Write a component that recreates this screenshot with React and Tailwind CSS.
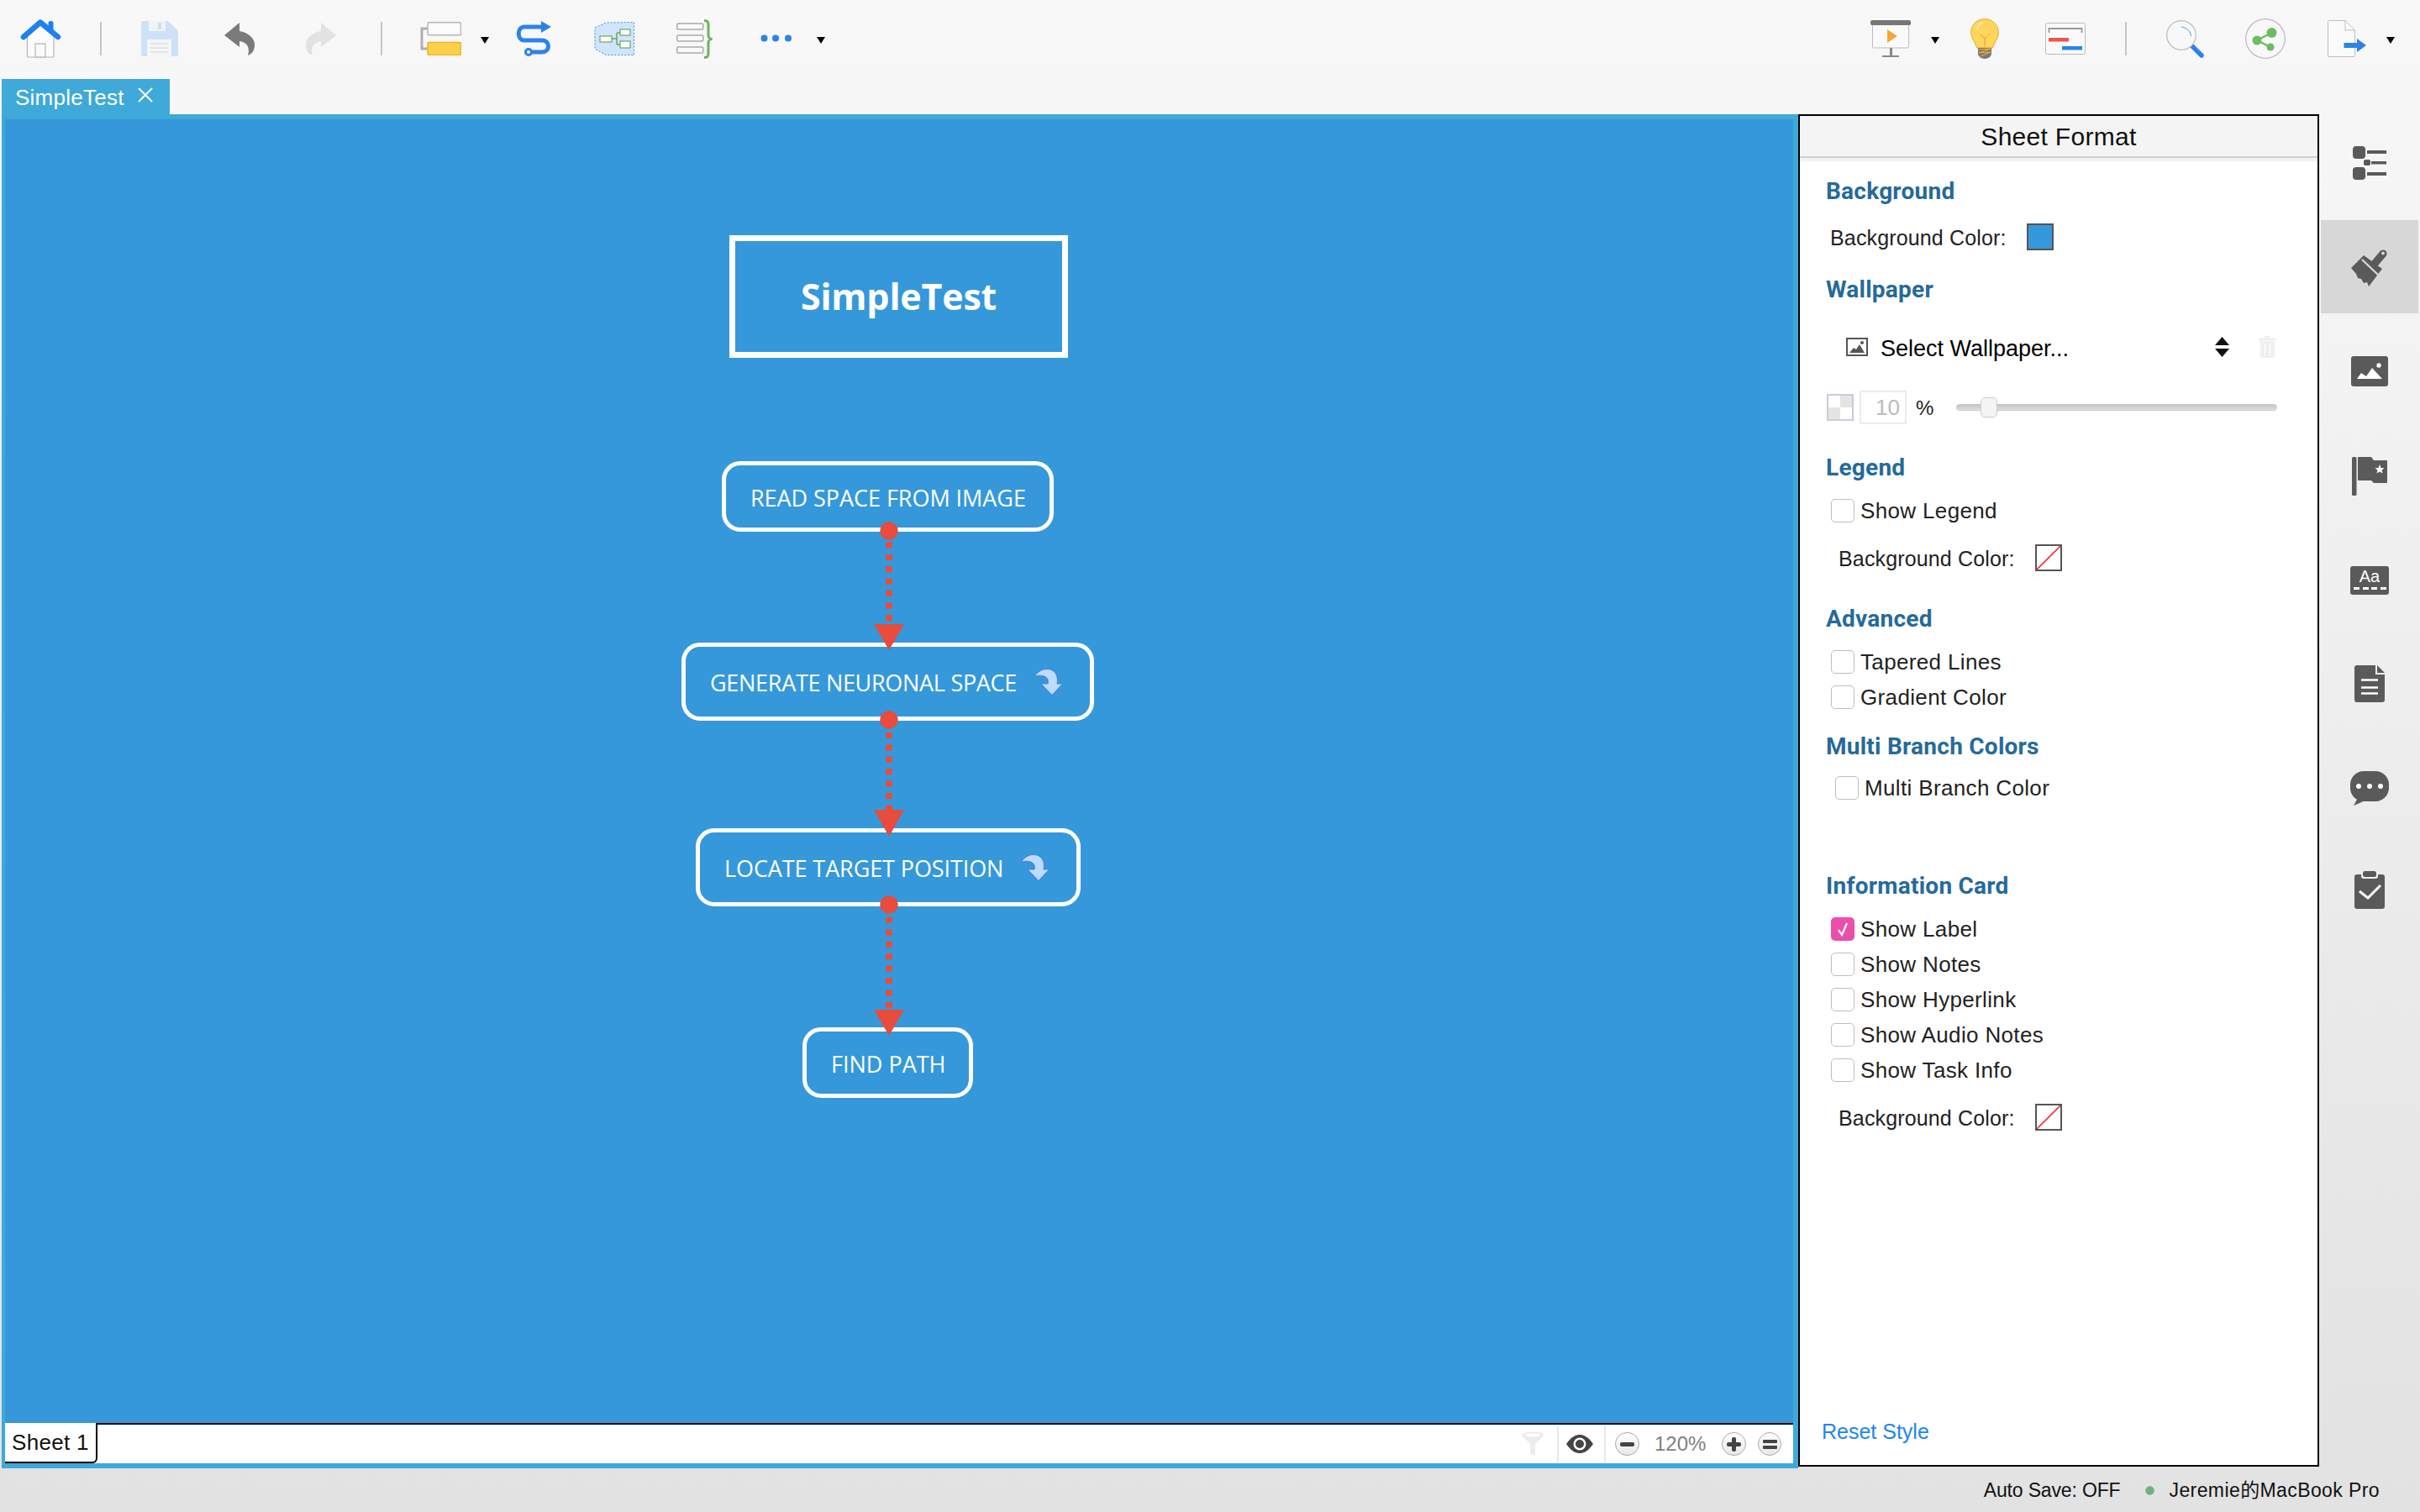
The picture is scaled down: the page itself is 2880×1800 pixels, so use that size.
import React from "react";

const Caret = ({ cls = "" }) => (
  <svg viewBox="0 0 10 8" className={`w-[10px] h-[8px] shrink-0 mt-[4px] ${cls}`}>
    <polygon points="0,0 10,0 5,8" fill="#000" />
  </svg>
);
const Sep = ({ cls = "" }) => <div className={`w-[2px] h-[40px] bg-[#c6c6c6] shrink-0 ${cls}`} />;

const Home = () => (
  <svg viewBox="0 0 50 46" className="w-[50px] h-[46px] shrink-0 ml-[24px]">
    <path d="M8.5 20 V44 Q8.5 45 9.5 45 H39 Q40 45 40 44 V20 L24 7Z" fill="#fcfcfc" stroke="#b4b4b4" strokeWidth="1.2" />
    <rect x="18" y="29" width="12" height="16" fill="#fafafa" stroke="#b4b4b4" strokeWidth="1.2" />
    <rect x="33.5" y="2" width="6" height="14" rx="2.5" fill="#1f80ee" />
    <path d="M4 21 L24 3.5 L45 21" fill="none" stroke="#1f80ee" strokeWidth="6.5" strokeLinecap="round" strokeLinejoin="round" />
  </svg>
);
const Save = () => (
  <svg viewBox="0 0 44 42" className="w-[44px] h-[42px] shrink-0 ml-[47px]">
    <path d="M1 0 H32 L44 12 V40 Q44 42 42 42 H2 Q0 42 0 40 V1Z" fill="#cde2f7" />
    <rect x="9" y="0" width="20" height="12" fill="#eef3f8" />
    <rect x="20" y="2" width="4" height="8" fill="#d5dce4" />
    <rect x="7" y="22" width="29" height="20" fill="#f3f5f7" />
    <path d="M11 27 H32 M11 32 H32 M11 37 H32" stroke="#dcdfe3" strokeWidth="1.5" />
  </svg>
);
const Undo = ({ color, flip, cls }) => (
  <svg viewBox="0 0 37 39" className={`w-[37px] h-[39px] shrink-0 ${flip ? "-scale-x-100" : ""} ${cls}`}>
    <path d="M0 15 L18 0 L18 10 C30 12 37 20 36 28 C35.5 33 33 37 28 39 C30 33 29 27 24 24 C22 23 20 22 18 22 L18 29 Z" fill={color} />
  </svg>
);
const Topic = () => (
  <svg viewBox="0 0 49 40" className="w-[49px] h-[40px] shrink-0 ml-[45px]">
    <path d="M9 8 H2 V32 H9" fill="none" stroke="#b0b0b0" strokeWidth="3" />
    <rect x="9" y="0.8" width="39.5" height="15" rx="1.5" fill="#fbfbfb" stroke="#b5b5b5" strokeWidth="1.5" />
    <rect x="9" y="24.5" width="39.5" height="15" rx="1.5" fill="#fdd04a" stroke="#f0b429" strokeWidth="1.5" />
  </svg>
);
const Relationship = () => (
  <svg viewBox="0 0 44 42" className="w-[44px] h-[42px] shrink-0 ml-[32px]">
    <path d="M31 7 H10 C1 7 1 23 10 23 H31 C41 23 41 37 31 37 H19" fill="none" stroke="#2a84e8" strokeWidth="5" />
    <polygon points="30,0 42,7 30,14" fill="#2a84e8" />
    <circle cx="15" cy="37" r="3.5" fill="#f7f7f7" stroke="#2a84e8" strokeWidth="3" />
  </svg>
);
const Boundary = () => (
  <svg viewBox="0 0 49 40" className="w-[49px] h-[40px] shrink-0 ml-[49px]">
    <polygon points="1,7 14,1 47.5,0.5 47.5,39.5 14,39.5 1,32" fill="#cfe5fb" stroke="#3d8fe8" strokeWidth="1" strokeDasharray="2 2" />
    <path d="M21 20 H27 M27 13 V27 M27 13 H31 M27 27 H31" stroke="#6aa85f" strokeWidth="1.5" fill="none" />
    <rect x="7" y="17" width="14" height="7" fill="#fff" stroke="#6aa85f" strokeWidth="1.2" />
    <rect x="31" y="9" width="12" height="7" fill="#fff" stroke="#6aa85f" strokeWidth="1.2" />
    <rect x="31" y="23" width="12" height="8" fill="#fff" stroke="#6aa85f" strokeWidth="1.2" />
  </svg>
);
const Summary = () => (
  <svg viewBox="0 0 44 47" className="w-[44px] h-[47px] shrink-0 ml-[49px]">
    <rect x="0.8" y="5" width="31" height="7" rx="1.5" fill="#fafafa" stroke="#aaa" strokeWidth="1.5" />
    <rect x="0.8" y="19" width="31" height="7" rx="1.5" fill="#fafafa" stroke="#aaa" strokeWidth="1.5" />
    <rect x="0.8" y="33" width="31" height="7" rx="1.5" fill="#fafafa" stroke="#aaa" strokeWidth="1.5" />
    <path d="M33 1.5 C38 1.5 38 4 38 8 L38 19 C38 22 39 23 42.5 23.5 C39 24 38 25 38 28 L38 39 C38 43 38 45.5 33 45.5" fill="none" stroke="#6cb45f" strokeWidth="3" />
  </svg>
);
const Dots = () => (
  <svg viewBox="0 0 38 9" className="w-[38px] h-[9px] shrink-0 ml-[56px] mt-[-1px]">
    <circle cx="4.5" cy="4.5" r="4" fill="#2a84e8" />
    <circle cx="18" cy="4.5" r="4" fill="#2a84e8" />
    <circle cx="33" cy="4.5" r="4" fill="#2a84e8" />
  </svg>
);
const Present = () => (
  <svg viewBox="0 0 48 44" className="w-[48px] h-[44px] shrink-0">
    <rect x="2.5" y="4" width="43" height="29" rx="1" fill="#fafafa" stroke="#bdbdbd" strokeWidth="1" />
    <rect x="0" y="0" width="48" height="6" rx="2" fill="#777" />
    <polygon points="20,11 32,19 20,27" fill="#f5a833" />
    <rect x="23" y="33" width="3" height="9" fill="#888" />
    <rect x="14" y="42" width="20" height="2" fill="#888" />
  </svg>
);
const Bulb = () => (
  <svg viewBox="0 0 34 48" className="w-[34px] h-[48px] shrink-0 ml-[37px]">
    <path d="M17 .7 C27 .7 33.3 8 33.3 17 C33.3 24 28 28 26.5 35 L7.5 35 C6 28 .7 24 .7 17 C.7 8 7 .7 17 .7Z" fill="#ffd55c" stroke="#e5a92e" strokeWidth="1" />
    <path d="M8 14 C8 9 11 6 15 5" fill="none" stroke="#fff3c4" strokeWidth="1.3" />
    <path d="M11 18 L17 24 L23 18 M17 24 V34" fill="none" stroke="#e0a030" strokeWidth="1" />
    <path d="M9 35 H25 V42 C25 45 21 48 17 48 C13 48 9 45 9 42Z" fill="#777" />
    <path d="M10 37 L24 36 L10 41 L24 40 L12 45" fill="none" stroke="#f0b030" strokeWidth="1.2" />
  </svg>
);
const Gantt = () => (
  <svg viewBox="0 0 48 38" className="w-[48px] h-[38px] shrink-0 ml-[55px]">
    <rect x="0.5" y="0.5" width="47" height="37" rx="2" fill="#fafafa" stroke="#bbb" />
    <path d="M4.5 12 V7 H43.5 V12" fill="none" stroke="#999" strokeWidth="1.8" />
    <rect x="4" y="18" width="24" height="4.5" fill="#ef5350" />
    <rect x="20" y="28" width="24" height="4.5" fill="#2a84e8" />
  </svg>
);
const Search = () => (
  <svg viewBox="0 0 45 45" className="w-[45px] h-[45px] shrink-0 ml-[47px]">
    <path d="M29 29 L42 42" stroke="#2a84e8" strokeWidth="5.5" strokeLinecap="round" />
    <circle cx="18" cy="18" r="17.3" fill="#f8f8f8" stroke="#c0c0c0" strokeWidth="1.3" />
    <path d="M18 8 C24 9 29 13 29.5 19" fill="none" stroke="#4a9cf0" strokeWidth="1" />
  </svg>
);
const Share = () => (
  <svg viewBox="0 0 48 48" className="w-[48px] h-[48px] shrink-0 ml-[49px]">
    <circle cx="24" cy="24" r="23.3" fill="#f8f8f8" stroke="#bbb" strokeWidth="1.2" />
    <path d="M31.5 17 L14 26 L30 34" fill="none" stroke="#6cbd62" strokeWidth="2.5" />
    <circle cx="31.5" cy="17" r="6" fill="#6cbd62" />
    <circle cx="14" cy="26" r="5.5" fill="#6cbd62" />
    <circle cx="30" cy="34" r="4.5" fill="#6cbd62" />
  </svg>
);
const ExportIcon = () => (
  <svg viewBox="0 0 46 44" className="w-[46px] h-[44px] shrink-0 ml-[50px]">
    <path d="M1.5 .5 H21 L32.5 12 V42 Q32.5 43.5 31 43.5 H2 Q.5 43.5 .5 42 V1.5Z" fill="#fafafa" stroke="#c0c0c0" />
    <path d="M21 .5 V12 H32.5" fill="none" stroke="#c0c0c0" />
    <rect x="19.5" y="27" width="17" height="6" fill="#2a84e8" />
    <polygon points="35,22 46,30 35,38" fill="#2a84e8" />
  </svg>
);

const Toolbar = () => (
  <div className="h-[94px] flex items-center pb-[2px] pr-[30px]">
    <Home />
    <Sep cls="ml-[45px]" />
    <Save />
    <Undo color="#7a7a7a" cls="ml-[55px]" />
    <Undo color="#e2e2e2" flip cls="ml-[59px]" />
    <Sep cls="ml-[53px]" />
    <Topic />
    <Caret cls="ml-[23px]" />
    <Relationship />
    <Boundary />
    <Summary />
    <Dots />
    <Caret cls="ml-[29px]" />
    <div className="ml-auto" />
    <Present />
    <Caret cls="ml-[24px]" />
    <Bulb />
    <Gantt />
    <Sep cls="ml-[47px]" />
    <Search />
    <Share />
    <ExportIcon />
    <Caret cls="ml-[24px]" />
  </div>
);

const TabRow = () => (
  <div className="h-[42px] pl-[2px] flex">
    <div className="w-[200px] h-[42px] bg-[#3fa9d9] flex items-center pl-[16px] pt-[2px] text-white text-[26px]">
      <span className="tracking-[0.25px]">SimpleTest</span>
      <svg viewBox="0 0 18 18" className="w-[18px] h-[18px] ml-[16px] mb-[6px]">
        <path d="M1 1 L17 17 M17 1 L1 17" stroke="#fff" strokeWidth="2" />
      </svg>
    </div>
  </div>
);

const FoldArrow = ({ cls = "" }) => (
  <svg viewBox="0 0 34 32" className={`w-[34px] h-[32px] shrink-0 ml-[21px] -mt-[4px] ${cls}`}>
    <path d="M.5 9 C5 2 11 .5 15 .5 C24 .5 29 8 27 18 H33.5 L21 31.5 L8 18 H16 C18 12 13 6 .5 9Z" fill="#bbdcff" stroke="#4a6fd6" strokeWidth="0.8" />
  </svg>
);

const Diagram = () => (
  <>
    <div className="absolute left-[862px] top-[138px] w-[403px] h-[146px] border-[7px] border-white flex items-center justify-center font-['Open_Sans'] font-bold text-white text-[43px] tracking-[-0.2px]">
      SimpleTest
    </div>
    <div className="absolute left-[853px] top-[407px] w-[395px] h-[84px] border-[5px] border-white rounded-[22px] flex items-center pl-[29px] pt-[4px] font-['Open_Sans'] text-white text-[27px] tracking-[-0.05px] whitespace-nowrap">
      READ SPACE FROM IMAGE
    </div>
    <div className="absolute left-[805px] top-[623px] w-[491px] h-[93px] border-[5px] border-white rounded-[22px] flex items-center pl-[29px] pt-[4px] font-['Open_Sans'] text-white text-[27px] tracking-[-0.3px] whitespace-nowrap">
      GENERATE NEURONAL SPACE
      <FoldArrow />
    </div>
    <div className="absolute left-[822px] top-[844px] w-[458px] h-[93px] border-[5px] border-white rounded-[22px] flex items-center pl-[29px] pt-[4px] font-['Open_Sans'] text-white text-[27px] tracking-[-0.1px] whitespace-nowrap">
      LOCATE TARGET POSITION
      <FoldArrow />
    </div>
    <div className="absolute left-[949px] top-[1081px] w-[203px] h-[84px] border-[5px] border-white rounded-[22px] flex items-center pl-[29px] pt-[4px] font-['Open_Sans'] text-white text-[27px] whitespace-nowrap">
      FIND PATH
    </div>
    <svg className="absolute left-0 top-0 w-[2128px] h-[1552px] pointer-events-none" viewBox="0 0 2128 1552">
      <g fill="#e74c3c" stroke="none">
        <circle cx="1052" cy="490" r="10.7" />
        <polygon points="1034,601 1070,601 1052,632" />
        <circle cx="1052" cy="715" r="10.7" />
        <polygon points="1034,822 1070,822 1052,854" />
        <circle cx="1052" cy="935" r="10.7" />
        <polygon points="1034,1060 1070,1060 1052,1091" />
      </g>
      <g stroke="#e74c3c" strokeWidth="8" strokeDasharray="7 7.4" fill="none">
        <path d="M1052 503.5 V601" />
        <path d="M1052 730 V822" />
        <path d="M1052 950 V1060" />
      </g>
    </svg>
  </>
);

const SheetBar = () => (
  <div className="h-[48px] bg-white border-t-2 border-black flex items-center pr-[14px]">
    <div className="w-[110px] h-[48px] -mt-[2px] bg-white border-r-2 border-b-2 border-black rounded-br-[6px] flex items-center pl-[8px] text-[26px] text-[#111] tracking-[0.3px] shrink-0">
      Sheet 1
    </div>
    <div className="ml-auto" />
    <svg viewBox="0 0 28 28" className="w-[28px] h-[28px] shrink-0">
      <path d="M1 2 C6 -1 22 -1 27 2 C27 6 20 10 17 14 V26 C15 28 13 28 11 26 V14 C8 10 1 6 1 2Z" fill="#ececec" />
      <ellipse cx="14" cy="3.5" rx="9" ry="2" fill="#fff" />
    </svg>
    <div className="w-[2px] h-[44px] bg-[#e8e8e8] ml-[15px] shrink-0" />
    <svg viewBox="0 0 32 22" className="w-[32px] h-[22px] ml-[9px] shrink-0">
      <path d="M0 11 C6 2 12 0 16 0 C20 0 26 2 32 11 C26 20 20 22 16 22 C12 22 6 20 0 11Z" fill="#444" />
      <circle cx="16" cy="11" r="7.5" fill="#fff" />
      <circle cx="16" cy="11" r="5" fill="#444" />
    </svg>
    <div className="w-[2px] h-[44px] bg-[#e8e8e8] ml-[13px] shrink-0" />
    <div className="w-[29px] h-[28px] rounded-full border border-[#aaa] bg-linear-to-b from-white to-[#e8e8e8] ml-[11px] flex items-center justify-center shrink-0">
      <div className="w-[17px] h-[5px] bg-[#444] rounded-[2px]" />
    </div>
    <div className="w-[61px] ml-[18px] text-[24px] text-[#808080] shrink-0">120%</div>
    <div className="relative w-[29px] h-[28px] rounded-full border border-[#aaa] bg-linear-to-b from-white to-[#e8e8e8] ml-[19px] flex items-center justify-center shrink-0">
      <div className="w-[17px] h-[5px] bg-[#444] rounded-[2px]" />
      <div className="absolute w-[5px] h-[17px] bg-[#444] rounded-[2px]" />
    </div>
    <div className="w-[28px] h-[28px] rounded-full border border-[#aaa] bg-linear-to-b from-white to-[#e8e8e8] ml-[14px] flex flex-col items-center justify-center gap-[3px] shrink-0">
      <div className="w-[17px] h-[4px] bg-[#444] rounded-[1px]" />
      <div className="w-[17px] h-[4px] bg-[#444] rounded-[1px]" />
    </div>
  </div>
);

const Heading = ({ children, cls }) => (
  <div className={`h-[30px] ml-[31px] flex items-center font-['Roboto'] font-bold text-[28px] tracking-[0.25px] text-[#256a9b] ${cls}`}>{children}</div>
);
const Check = ({ label, cls = "", on }) => (
  <div className={`h-[28px] flex items-center ${cls}`}>
    {on ? (
      <div className="w-[28px] h-[28px] rounded-[5px] bg-[#ec4fa9] flex items-center justify-center shrink-0">
        <svg viewBox="0 0 20 20" className="w-[20px] h-[20px]">
          <path d="M5 11 L9 17 L15 3" fill="none" stroke="#fff" strokeWidth="2.2" />
        </svg>
      </div>
    ) : (
      <div className="w-[28px] h-[28px] rounded-[5px] border-[1.5px] border-[#bdbdbd] bg-white shrink-0" />
    )}
    <span className="ml-[7px] pt-[1px] text-[26px] text-[#222] tracking-[0.35px] whitespace-nowrap">{label}</span>
  </div>
);
const NoColor = () => (
  <div className="w-[32px] h-[32px] border-2 border-[#555] bg-white shrink-0">
    <svg viewBox="0 0 28 28" className="w-[28px] h-[28px]">
      <path d="M0 28 L28 0" stroke="#f03040" strokeWidth="1.6" />
    </svg>
  </div>
);
const ColorRow = ({ cls, label = "Background Color:", children }) => (
  <div className={`h-[32px] flex items-center ${cls}`}>
    <span className="w-[234px] text-[25px] text-[#222] tracking-[0.15px] whitespace-nowrap pt-[3px]">{label}</span>
    {children}
  </div>
);

const Panel = () => (
  <div className="w-[620px] h-[1610px] border-2 border-black bg-white flex flex-col shrink-0">
    <div className="h-[48px] bg-[#f4f4f4] flex items-center justify-center text-[30px] tracking-[0.3px] text-[#111] shrink-0">Sheet Format</div>
    <div className="h-[6px] bg-linear-to-b from-[#cfcfcf] from-30% to-[#f2f2f2] to-30% shrink-0" />
    <Heading cls="mt-[21px]">Background</Heading>
    <ColorRow cls="mt-[23px] ml-[36px]">
      <div className="w-[32px] h-[32px] border-2 border-[#555] bg-[#3598db] shrink-0" />
    </ColorRow>
    <Heading cls="mt-[32px]">Wallpaper</Heading>
    <div className="h-[26px] mt-[40px] ml-[55px] flex items-center">
      <svg viewBox="0 0 26 22" className="w-[26px] h-[22px] shrink-0">
        <rect x="1" y="1" width="24" height="20" fill="#fff" stroke="#555" strokeWidth="2" />
        <polygon points="4,18 9,12 12,14 16,8 22,18" fill="#555" />
        <circle cx="19" cy="6" r="2" fill="#555" />
      </svg>
      <span className="ml-[15px] w-[398px] text-[27px] text-black whitespace-nowrap pt-[4px]">Select Wallpaper...</span>
      <svg viewBox="0 0 17 24" className="w-[17px] h-[24px] shrink-0">
        <polygon points="8.5,0 17,10 0,10" fill="#111" />
        <polygon points="8.5,24 17,14 0,14" fill="#111" />
      </svg>
      <svg viewBox="0 0 23 26" className="w-[23px] h-[26px] ml-[34px] shrink-0">
        <path d="M1 4 H22 M8 1 H15" stroke="#eee" strokeWidth="2.5" />
        <path d="M3 6 H20 V24 Q20 26 18 26 H5 Q3 26 3 24Z M8 9 V23 H9 V9Z M14 9 V23 H15 V9Z" fill="#f0f0f0" fillRule="evenodd" />
      </svg>
    </div>
    <div className="h-[40px] mt-[39px] ml-[32px] flex items-center">
      <svg viewBox="0 0 32 32" className="w-[32px] h-[32px] shrink-0">
        <rect x="1" y="1" width="30" height="30" fill="#fff" stroke="#c9ccd8" strokeWidth="2" />
        <rect x="16" y="2" width="14" height="14" fill="#e4e4e4" />
        <rect x="2" y="16" width="14" height="14" fill="#e4e4e4" />
      </svg>
      <div className="w-[56px] h-[40px] ml-[7px] border-2 border-[#ececec] flex items-center justify-end pr-[6px] pt-[1px] text-[26px] text-[#bbb] shrink-0">10</div>
      <span className="ml-[11px] pt-[2px] w-[20px] text-[24px] text-[#222]">%</span>
      <div className="relative ml-[28px] w-[382px] h-[8px] rounded-full bg-linear-to-b from-[#c4c4c4] to-[#e0e0e0] border border-[#c8c8c8] flex items-center">
        <div className="absolute left-[28px] w-[20px] h-[24px] rounded-[5px] bg-[#f4f4f4] border border-[#cdcdcd]" />
      </div>
    </div>
    <Heading cls="mt-[37px]">Legend</Heading>
    <Check label="Show Legend" cls="mt-[22px] ml-[37px]" />
    <ColorRow cls="mt-[26px] ml-[46px]"><NoColor /></ColorRow>
    <Heading cls="mt-[42px]">Advanced</Heading>
    <Check label="Tapered Lines" cls="mt-[22px] ml-[37px]" />
    <Check label="Gradient Color" cls="mt-[14px] ml-[37px]" />
    <Heading cls="mt-[30px]">Multi Branch Colors</Heading>
    <Check label="Multi Branch Color" cls="mt-[20px] ml-[42px]" />
    <Heading cls="mt-[88px]">Information Card</Heading>
    <Check label="Show Label" on cls="mt-[22px] ml-[37px]" />
    <Check label="Show Notes" cls="mt-[14px] ml-[37px]" />
    <Check label="Show Hyperlink" cls="mt-[14px] ml-[37px]" />
    <Check label="Show Audio Notes" cls="mt-[14px] ml-[37px]" />
    <Check label="Show Task Info" cls="mt-[14px] ml-[37px]" />
    <ColorRow cls="mt-[26px] ml-[46px]"><NoColor /></ColorRow>
    <div className="mt-auto mb-[24px] ml-[26px] h-[30px] flex items-center text-[25px] text-[#2086f0]">Reset Style</div>
  </div>
);

const RailIcons = () => (
  <div className="w-[120px] flex flex-col items-center pt-[38px]">
    <svg viewBox="0 0 40 40" className="w-[40px] h-[40px] shrink-0">
      <g fill="#5a5a5a">
        <rect x="0" y="0" width="15" height="15" rx="4" />
        <rect x="17" y="5" width="23" height="4" />
        <rect x="13" y="16" width="8" height="7" rx="2" />
        <rect x="22" y="18" width="18" height="3.5" />
        <rect x="0" y="25" width="15" height="15" rx="4" />
        <rect x="17" y="31" width="23" height="4" />
      </g>
    </svg>
    <div className="mt-[48px] w-[116px] h-[111px] bg-[#d7d7d7] flex items-center justify-center shrink-0">
      <svg viewBox="0 0 44 46" className="w-[44px] h-[46px]">
        <path d="M38 7 L27 20" stroke="#5a5a5a" strokeWidth="9" strokeLinecap="round" />
        <circle cx="38" cy="6.5" r="2" fill="#d7d7d7" />
        <polygon points="0,24 15,9 37,25 21,46 19,41 15,42 12,37 8,36 6,31" fill="#5a5a5a" />
        <path d="M13 14 L33 33" stroke="#d7d7d7" strokeWidth="2.4" />
      </svg>
    </div>
    <svg viewBox="0 0 44 36" className="w-[44px] h-[36px] mt-[51px] shrink-0">
      <rect width="44" height="36" rx="3" fill="#5a5a5a" />
      <polygon points="7,27 12,20 18,24 25,14 37,27" fill="#fff" />
      <circle cx="33" cy="11" r="2.7" fill="#fff" />
    </svg>
    <svg viewBox="0 0 42 46" className="w-[42px] h-[46px] mt-[84px] shrink-0">
      <rect x="0" y="0" width="5.5" height="46" rx="1.5" fill="#5a5a5a" />
      <path d="M7 0 H23 L26 4 H41 Q42 4 42 5 V30 Q42 31 41 31 H26 L23 28 H7Z" fill="#5a5a5a" />
      <polygon points="33,9 34.6,13 38.5,13.3 35.5,15.8 36.5,19.5 33,17.5 29.5,19.5 30.5,15.8 27.5,13.3 31.4,13" fill="#fff" />
    </svg>
    <div className="relative w-[46px] h-[34px] mt-[84px] rounded-[3px] bg-[#5a5a5a] shrink-0 flex justify-center">
      <span className="text-white text-[20px] leading-[24px]">Aa</span>
      <div className="absolute left-[4px] right-[3px] bottom-[6px] h-[3px] flex justify-between">
        <div className="w-[7px] bg-white" />
        <div className="w-[7px] bg-white" />
        <div className="w-[7px] bg-white" />
        <div className="w-[7px] bg-white" />
      </div>
    </div>
    <svg viewBox="0 0 36 44" className="w-[36px] h-[44px] mt-[84px] shrink-0">
      <path d="M3 0 H25 V11 H36 V41 Q36 44 33 44 H3 Q0 44 0 41 V3 Q0 0 3 0Z" fill="#5a5a5a" />
      <polygon points="27,0 36,9 27,9" fill="#5a5a5a" />
      <path d="M8 17.5 H28 M8 26.5 H28 M8 33.5 H28" stroke="#fff" strokeWidth="2.6" />
    </svg>
    <svg viewBox="0 0 46 41" className="w-[46px] h-[41px] mt-[82px] shrink-0">
      <rect width="46" height="36" rx="16" fill="#5a5a5a" />
      <polygon points="9,32 4,41 18,35" fill="#5a5a5a" />
      <circle cx="10" cy="18" r="3" fill="#fff" />
      <circle cx="23" cy="18" r="3" fill="#fff" />
      <circle cx="36" cy="18" r="3" fill="#fff" />
    </svg>
    <svg viewBox="0 0 36 45" className="w-[36px] h-[45px] mt-[78px] shrink-0">
      <rect x="0" y="4" width="36" height="41" rx="3" fill="#5a5a5a" />
      <rect x="8" y="-1" width="20" height="10" rx="3" fill="#f0f0f0" />
      <rect x="10" y="0" width="16" height="7" rx="2.5" fill="#5a5a5a" />
      <path d="M6 24 L16 32 L31 17" fill="none" stroke="#fff" strokeWidth="3" />
    </svg>
  </div>
);

export default function App() {
  return (
    <div className="w-[2880px] h-[1800px] flex flex-col overflow-hidden bg-linear-to-b from-[#f8f8f8] to-[#e2e2e2] font-['Liberation_Sans','Noto_Sans_CJK_SC',sans-serif]">
      <Toolbar />
      <TabRow />
      <div className="h-[1612px] flex items-start">
        <div className="w-[2138px] h-[1612px] ml-[2px] border-x-[4px] border-r-[6px] border-y-[6px] border-[#3fa9d9] flex flex-col shrink-0">
          <div className="relative flex-1 bg-[#3598db]">
            <Diagram />
          </div>
          <SheetBar />
        </div>
        <Panel />
        <RailIcons />
      </div>
      <div className="h-[52px] flex items-center justify-end pr-[48px] text-[23px] text-[#111]">
        <span className="tracking-[-0.15px]">Auto Save: OFF</span>
        <div className="w-[11px] h-[11px] rounded-full bg-[#6fb07a] border border-[#8bbd94] ml-[29px]" />
        <span className="ml-[18px] tracking-[0.4px] whitespace-nowrap">Jeremie的MacBook Pro</span>
      </div>
    </div>
  );
}
